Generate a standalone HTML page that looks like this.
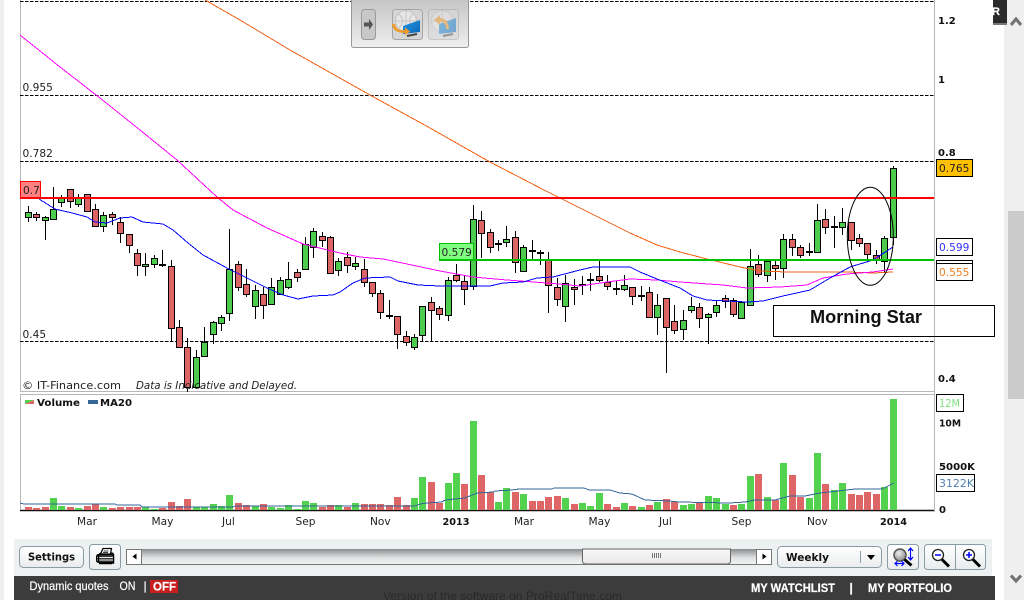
<!DOCTYPE html>
<html><head><meta charset="utf-8"><title>Chart</title>
<style>
html,body{margin:0;padding:0;width:1024px;height:600px;overflow:hidden;background:#fff}
svg{display:block;position:absolute;left:0;top:0}
text{font-family:"DejaVu Sans",sans-serif;font-size:10.6px;fill:#222}
.b{font-weight:bold;fill:#111;font-size:10px}
.l{font-family:"Liberation Sans",sans-serif;font-size:12px;fill:#fff;stroke:#fff;stroke-width:.2px}
</style></head><body>
<svg width="1024" height="600" viewBox="0 0 1024 600" xmlns="http://www.w3.org/2000/svg">
<defs>
<linearGradient id="tb" x1="0" y1="0" x2="0" y2="1"><stop offset="0" stop-color="#c4c4c4"/><stop offset="1" stop-color="#efefef"/></linearGradient>
<linearGradient id="btn" x1="0" y1="0" x2="0" y2="1"><stop offset="0" stop-color="#fff"/><stop offset="1" stop-color="#e9eced"/></linearGradient>
<linearGradient id="sb" x1="0" y1="0" x2="0" y2="1"><stop offset="0" stop-color="#8b8d8e"/><stop offset=".55" stop-color="#dfe1e2"/><stop offset="1" stop-color="#f4f5f5"/></linearGradient>
<linearGradient id="th" x1="0" y1="0" x2="0" y2="1"><stop offset="0" stop-color="#f8f8f8"/><stop offset="1" stop-color="#e8e8e8"/></linearGradient>
<linearGradient id="mon" x1="0" y1="0" x2="1" y2="1"><stop offset="0" stop-color="#1f9be0"/><stop offset="1" stop-color="#0d63b8"/></linearGradient>
<radialGradient id="gl" cx=".4" cy=".35" r=".7"><stop offset="0" stop-color="#eee"/><stop offset="1" stop-color="#888"/></radialGradient>
</defs>

<!-- page edges -->
<rect x="0" y="0" width="4" height="600" fill="#efefef"/>
<rect x="1004" y="0" width="20" height="600" fill="#efefef"/>
<rect x="1008" y="211" width="16" height="188" fill="#cbcbcb"/>
<path d="M1011 25l5-6 5 6" fill="none" stroke="#707070" stroke-width="3"/>
<path d="M1011 575.500l5 5.500 5-5.500" fill="none" stroke="#707070" stroke-width="3"/>
<rect x="993" y="0" width="14" height="23" fill="#2a2a2a"/>
<rect x="993" y="23" width="14" height="2" fill="#777"/>
<text x="992" y="15" class="l" style="font-weight:bold;font-size:11px">R</text>

<!-- frames -->
<path d="M20.5 0V392M20.5 394V511M934.5 0V512M20 391.5H934M20 394.5H934" fill="none" stroke="#b4b8ba" stroke-width="1"/>
<path d="M20 510.5H934" stroke="#111" stroke-width="1.5"/>

<!-- dashed levels -->
<path d="M20 1.5H934M20 95.5H934M20 161.5H934M20 341.5H934" fill="none" stroke="#000" stroke-dasharray="3.5 1.5"/>

<!-- volume bars -->
<path fill="#53d250" d="M50 510v-12h7v12zM58 510v-4h7v4zM75 510v-2h7v2zM100 510v-3h7v3zM142 510v-3h7v3zM151 510v-1h7v1zM193 510v-3h7v3zM201 510v-3h7v3zM210 510v-6h7v6zM218 510v-4h7v4zM226 510v-15h7v15zM252 510v-4h7v4zM268 510v-3h7v3zM277 510v-2h7v2zM285 510v-5h7v5zM294 510v-1h7v1zM302 510v-9h7v9zM310 510v-7h7v7zM335 510v-5h7v5zM352 510v-7h7v7zM411 510v-12h7v12zM419 510v-33h7v33zM445 510v-27h7v27zM453 510v-37h7v37zM470 510v-89h7v89zM495 510v-8h7v8zM503 510v-22h7v22zM520 510v-16h7v16zM562 510v-12h7v12zM579 510v-7h7v7zM587 510v-4h7v4zM596 510v-17h7v17zM621 510v-7h7v7zM638 510v-3h7v3zM654 510v-8h7v8zM680 510v-5h7v5zM688 510v-6h7v6zM705 510v-14h7v14zM713 510v-12h7v12zM722 510v-6h7v6zM738 510v-6h7v6zM747 510v-34h7v34zM764 510v-13h7v13zM780 510v-47h7v47zM806 510v-12h7v12zM814 510v-57h7v57zM831 510v-20h7v20zM839 510v-27h7v27zM881 510v-23h7v23zM890 510v-111h7v111z"/>
<path fill="#de6666" d="M25 510v-3h7v3zM33 510v-2h7v2zM42 510v-3h7v3zM67 510v-3h7v3zM84 510v-4h7v4zM92 510v-6h7v6zM109 510v-2h7v2zM117 510v-3h7v3zM126 510v-3h7v3zM134 510v-3h7v3zM159 510v-2h7v2zM168 510v-8h7v8zM176 510v-4h7v4zM184 510v-11h7v11zM235 510v-7h7v7zM243 510v-5h7v5zM260 510v-6h7v6zM319 510v-3h7v3zM327 510v-5h7v5zM344 510v-3h7v3zM361 510v-6h7v6zM369 510v-6h7v6zM377 510v-6h7v6zM386 510v-5h7v5zM394 510v-13h7v13zM403 510v-5h7v5zM428 510v-28h7v28zM436 510v-7h7v7zM461 510v-26h7v26zM478 510v-35h7v35zM487 510v-18h7v18zM512 510v-18h7v18zM529 510v-9h7v9zM537 510v-9h7v9zM545 510v-13h7v13zM554 510v-14h7v14zM571 510v-6h7v6zM604 510v-6h7v6zM613 510v-3h7v3zM629 510v-4h7v4zM646 510v-5h7v5zM663 510v-11h7v11zM671 510v-8h7v8zM696 510v-7h7v7zM730 510v-5h7v5zM755 510v-36h7v36zM772 510v-10h7v10zM789 510v-35h7v35zM797 510v-13h7v13zM822 510v-26h7v26zM848 510v-16h7v16zM856 510v-15h7v15zM864 510v-18h7v18zM873 510v-16h7v16z"/>
<polyline fill="none" stroke="#336699" stroke-width="1" shape-rendering="crispEdges" points="20,503 24,504 115,504 117,505 140,505 142,507 233,507 235,506 415,506 420,504 427,503 442,502 445,500 465,498 477,493 493,492 495,491 512,490 519,489 552,489 554,488 584,488 589,490 610,490 620,493 632,494 645,500 669,501 679,502 729,503 745,502 755,500 775,500 790,496 805,496 820,493 855,489 882,489 894,483"/>

<!-- candle wicks -->
<path fill="none" stroke="#000" stroke-width="1" d="M28.5 206V222M36.5 212V221M45.5 216V240M53.5 187V220M61.5 195V207M70.5 189V208M78.5 194V207M87.5 194V212M95.5 204V227M103.5 212V232M112.5 212V225M120.5 217V243M129.5 234V253M137.5 249V276M145.5 253V276M154.5 255V268M162.5 250V267M171.5 260V342M179.5 320V347M187.5 338V392M196.5 350V387M204.5 327V356M213.5 321V344M221.5 315V331M229.5 229V321M238.5 261V291M246.5 269V297M255.5 285V319M263.5 287V319M271.5 278V305M280.5 277V295M288.5 262V289M297.5 269V282M305.5 237V270M313.5 228V258M322.5 232V247M330.5 236V274M338.5 258V276M347.5 252V273M355.5 257V270M364.5 259V287M372.5 282V297M380.5 290V319M389.5 300V319M397.5 316V349M406.5 331V346M414.5 334V350M422.5 306V342M431.5 297V342M439.5 306V320M448.5 277V321M456.5 264V282M464.5 275V305M473.5 205V290M481.5 211V258M490.5 229V253M498.5 240V251M506.5 226V247M515.5 231V273M523.5 245V272M532.5 240V259M540.5 250V265M548.5 252V313M557.5 278V306M565.5 275V322M574.5 279V305M582.5 276V295M590.5 273V291M599.5 260V282M607.5 275V290M616.5 281V295M624.5 275V291M632.5 287V305M641.5 286V301M649.5 287V318M657.5 294V335M666.5 298V373M674.5 305V334M683.5 310V340M691.5 297V313M699.5 303V328M708.5 313V344M716.5 300V317M725.5 295V308M733.5 298V317M741.5 302V319M750.5 249V306M758.5 255V277M767.5 261V282M775.5 260V280M783.5 234V278M792.5 234V256M800.5 245V258M809.5 243V256M817.5 204V252M825.5 209V234M834.5 216V248M842.5 208V235M851.5 222V250M859.5 234V247M867.5 243V259M876.5 250V264M884.5 236V272M893.5 166V245"/>
<!-- green bodies -->
<path fill="#4ccb4c" stroke="#000" stroke-width="1" d="M25.5 212.5h6v5h-6zM42.5 217.5h6v3h-6zM50.5 209.5h6v10h-6zM58.5 198.5h6v4h-6zM75.5 198.5h6v6h-6zM100.5 215.5h6v11h-6zM142.5 264.5h6v2h-6zM151.5 258.5h6v6h-6zM193.5 357.5h6v30h-6zM201.5 342.5h6v14h-6zM210.5 322.5h6v12h-6zM218.5 317.5h6v6h-6zM226.5 269.5h6v44h-6zM252.5 290.5h6v16h-6zM268.5 287.5h6v17h-6zM277.5 280.5h6v14h-6zM285.5 279.5h6v8h-6zM302.5 244.5h6v25h-6zM310.5 231.5h6v16h-6zM335.5 261.5h6v9h-6zM352.5 263.5h6v3h-6zM411.5 337.5h6v10h-6zM419.5 306.5h6v29h-6zM445.5 280.5h6v35h-6zM470.5 219.5h6v67h-6zM503.5 239.5h6v3h-6zM520.5 247.5h6v24h-6zM562.5 283.5h6v23h-6zM621.5 285.5h6v4h-6zM654.5 305.5h6v12h-6zM680.5 320.5h6v9h-6zM688.5 306.5h6v4h-6zM705.5 314.5h6v3h-6zM713.5 305.5h6v7h-6zM738.5 302.5h6v16h-6zM747.5 266.5h6v39h-6zM764.5 261.5h6v14h-6zM780.5 239.5h6v29h-6zM814.5 220.5h6v32h-6zM839.5 222.5h6v5h-6zM881.5 238.5h6v23h-6zM890.5 168.5h6v69h-6z"/>
<!-- red bodies -->
<path fill="#dd6464" stroke="#000" stroke-width="1" d="M33.5 214.5h6v3h-6zM67.5 189.5h6v12h-6zM84.5 194.5h6v17h-6zM92.5 209.5h6v17h-6zM109.5 214.5h6v3h-6zM117.5 222.5h6v11h-6zM126.5 234.5h6v11h-6zM134.5 253.5h6v12h-6zM168.5 266.5h6v62h-6zM176.5 327.5h6v20h-6zM184.5 347.5h6v40h-6zM235.5 264.5h6v23h-6zM243.5 284.5h6v10h-6zM260.5 294.5h6v11h-6zM294.5 272.5h6v5h-6zM319.5 236.5h6v4h-6zM327.5 237.5h6v36h-6zM344.5 257.5h6v8h-6zM361.5 269.5h6v13h-6zM369.5 282.5h6v11h-6zM377.5 293.5h6v19h-6zM394.5 316.5h6v18h-6zM403.5 336.5h6v6h-6zM428.5 302.5h6v8h-6zM436.5 308.5h6v6h-6zM453.5 275.5h6v5h-6zM461.5 281.5h6v8h-6zM478.5 220.5h6v13h-6zM487.5 232.5h6v15h-6zM512.5 237.5h6v25h-6zM545.5 260.5h6v25h-6zM554.5 287.5h6v12h-6zM571.5 287.5h6v2h-6zM596.5 276.5h6v4h-6zM604.5 282.5h6v4h-6zM629.5 287.5h6v9h-6zM646.5 292.5h6v25h-6zM663.5 298.5h6v29h-6zM671.5 321.5h6v9h-6zM696.5 307.5h6v11h-6zM722.5 298.5h6v3h-6zM730.5 300.5h6v14h-6zM755.5 264.5h6v10h-6zM772.5 265.5h6v3h-6zM789.5 239.5h6v8h-6zM797.5 247.5h6v8h-6zM822.5 219.5h6v8h-6zM848.5 222.5h6v18h-6zM856.5 238.5h6v5h-6zM864.5 243.5h6v11h-6zM873.5 255.5h6v4h-6z"/>
<!-- doji -->
<path fill="none" stroke="#000" stroke-width="2" d="M159 265h7M386 316h7M495 244h7M529 251h7M537 253h7M579 285h7M587 280h7M613 289h7M638 296h7M806 252h7M831 227h7"/>

<!-- moving averages -->
<polyline fill="none" stroke="#f06010" stroke-width="1" shape-rendering="crispEdges" points="205,0 240,20 290,50 370,95 430,128 490,162 544,190 560,198 590,213 630,233 657,245 680,252 703,258 740,267 760,271 787,272 847,272 873,273 893,272"/>
<polyline fill="none" stroke="#f0f" stroke-width="1" shape-rendering="crispEdges" points="20,35 60,67 100,98 140,130 177,160 217,197 233,210 267,228 303,244 340,253 360,257 383,259 407,264 440,271 473,277 507,280 547,283 580,286 607,282 630,279 657,280 680,282 723,285 747,288 780,287 807,285 823,278 847,274 873,272 893,269"/>
<polyline fill="none" stroke="#00f" stroke-width="1" shape-rendering="crispEdges" points="39,199 55,209 72,213 87,217 95,222 107,223 120,218 132,217 143,222 163,224 173,230 188,243 203,255 227,268 247,278 267,288 283,295 298,299 313,296 333,295 340,292 353,283 365,278 390,277 398,281 418,285 440,286 490,286 503,283 523,282 537,278 553,277 580,270 593,267 630,267 640,272 657,279 680,288 693,296 707,300 747,302 763,301 783,296 810,290 830,278 850,267 873,260 893,247"/>

<!-- levels -->
<rect x="20" y="197" width="914" height="2" fill="#f00"/>
<rect x="439" y="259" width="495" height="2" fill="#00c000"/>
<rect x="20.5" y="181.5" width="20" height="16" fill="#ff8080" stroke="#f00"/>
<text x="23" y="194">0.7</text>
<rect x="439.5" y="243.5" width="34" height="16" fill="#80ff80" stroke="#00c000"/>
<text x="441.500" y="256">0.579</text>
<text x="22.500" y="91">0.955</text>
<text x="22.500" y="157">0.782</text>
<text x="22.500" y="338">0.45</text>
<text x="22" y="389" textLength="99" lengthAdjust="spacingAndGlyphs">© IT-Finance.com</text>
<text x="136" y="389" style="font-style:italic" textLength="161" lengthAdjust="spacingAndGlyphs">Data is Indicative and Delayed.</text>

<!-- annotation -->
<ellipse cx="870.3" cy="236.3" rx="23" ry="49" fill="none" stroke="#000"/>
<rect x="773.5" y="305.5" width="221" height="31" fill="none" stroke="#000"/>
<text x="810" y="323" style="font-family:'Liberation Sans',sans-serif;font-size:18px;font-weight:bold;fill:#111" textLength="112" lengthAdjust="spacingAndGlyphs">Morning Star</text>

<!-- right axis -->
<text x="938" y="24" class="b">1.2</text>
<text x="938" y="83" class="b">1</text>
<text x="938" y="156" class="b">0.8</text>
<text x="938" y="382" class="b">0.4</text>
<rect x="936.5" y="159.5" width="36" height="17" fill="#ffc000" stroke="#000"/>
<text x="939" y="172">0.765</text>
<rect x="936.5" y="238.5" width="36" height="17" fill="#fff" stroke="#000"/>
<text x="939" y="251" style="fill:#3333ff">0.599</text>
<rect x="936.5" y="260.5" width="36" height="3" fill="#fff" stroke="#000"/>
<rect x="936.5" y="263.5" width="36" height="17" fill="#fff" stroke="#000"/>
<text x="939" y="276" style="fill:#f08020">0.555</text>

<!-- volume legend -->
<path d="M25 400h9l-9 4z" fill="#53d250"/><path d="M34 400v4h-9z" fill="#de6666"/>
<text x="37" y="406" class="b" textLength="43" lengthAdjust="spacingAndGlyphs">Volume</text>
<rect x="88" y="400" width="10" height="4" fill="#336699"/>
<text x="100" y="406" class="b" textLength="32" lengthAdjust="spacingAndGlyphs">MA20</text>

<!-- volume axis -->
<rect x="936.5" y="394.5" width="27" height="17" fill="#fff" stroke="#000"/>
<text x="939" y="407" style="fill:#80e080" textLength="21" lengthAdjust="spacingAndGlyphs">12M</text>
<text x="939" y="426.500" class="b" textLength="22" lengthAdjust="spacingAndGlyphs">10M</text>
<text x="939" y="470" class="b" textLength="36" lengthAdjust="spacingAndGlyphs">5000K</text>
<rect x="936.5" y="474.5" width="38" height="17" fill="#fff" stroke="#000"/>
<text x="939" y="487" style="fill:#4f7fb0" textLength="35" lengthAdjust="spacingAndGlyphs">3122K</text>
<text x="939" y="513" class="b">0</text>

<!-- date axis -->
<text x="77" y="525">Mar</text><text x="151.500" y="525">May</text><text x="222" y="525">Jul</text><text x="295.500" y="525">Sep</text><text x="370" y="525">Nov</text><text x="442.500" y="525" class="b" textLength="27" lengthAdjust="spacingAndGlyphs">2013</text>
<text x="514" y="525">Mar</text><text x="588.500" y="525">May</text><text x="659" y="525">Jul</text><text x="731.500" y="525">Sep</text><text x="807" y="525">Nov</text><text x="880" y="525" class="b" textLength="27" lengthAdjust="spacingAndGlyphs">2014</text>

<!-- top floating toolbar -->
<rect x="351.5" y="-2" width="117" height="49.5" rx="2" fill="url(#tb)" stroke="#999"/>
<rect x="361.5" y="9.5" width="14" height="30" rx="3" fill="#c8c8c8" stroke="#999"/>
<path d="M364 22.5h5v-3.500l4 5.500-4 5.500v-3.500h-5z" fill="#555"/>
<g>
<rect x="392.500" y="9.500" width="30" height="30" rx="3" fill="#d6d6d6" stroke="#a5a5a5"/>
<circle cx="406" cy="21" r="10.500" fill="#e6e6e6" stroke="#c4c4c4"/>
<path d="M396 21h20M406 11v20M399 14q7 7 0 14M413 14q-7 7 0 14" fill="none" stroke="#c4c4c4"/>
<path d="M403 26l17-6v12l-17 2z" fill="url(#mon)"/>
<path d="M407 36l10-2" stroke="#444" stroke-width="2"/>
<path d="M395 24q1 7 10 6v-2.500l5 4-5 4v-2.500q-12 0-13-9z" fill="#f09a28"/>
</g>
<g opacity=".5">
<rect x="428.500" y="9.500" width="30" height="30" rx="3" fill="#d6d6d6" stroke="#a5a5a5"/>
<circle cx="442" cy="21" r="10.500" fill="#e6e6e6" stroke="#c4c4c4"/>
<path d="M432 21h20M442 11v20" fill="none" stroke="#c4c4c4"/>
<path d="M439 24l17-6v14l-17 2z" fill="url(#mon)"/>
<path d="M443 36l10-2" stroke="#444" stroke-width="2"/>
<path d="M449 29q-1-11-9-11v-3l-6 5 6 5v-3q6 0 6 7z" fill="#f09a28"/>
</g>

<!-- bottom toolbar -->
<rect x="14" y="539" width="978" height="37" fill="#edf1f2"/>
<rect x="19.500" y="546.500" width="64" height="21" rx="4" fill="url(#btn)" stroke="#8a9ba3"/>
<text x="28" y="560.500" class="b" style="font-size:10.500px" textLength="47" lengthAdjust="spacingAndGlyphs">Settings</text>
<rect x="89.500" y="544.500" width="31" height="25" rx="3" fill="url(#btn)" stroke="#8a9ba3"/>
<g fill="none" stroke="#000">
<path d="M99.500 558v-3a2 2 0 0 1 2-2h10a2 2 0 0 1 2 2v8h-2" stroke-width="1.500"/>
<rect x="96.500" y="554.500" width="17" height="8" rx="2" fill="#333"/>
<path d="M97 557.500h16M97 560h16" stroke="#eee" stroke-width="1"/>
<path d="M98.500 554v8M99 563.500h13" stroke-width="1.500"/>
<path d="M100.500 554l2.500-5.500h8.500l-1 5.500z" fill="#fff" stroke-width="1.200"/>
<path d="M103.500 551h5M103 552.500h5" stroke-width=".8"/>
</g>
<!-- scrollbar -->
<rect x="126" y="549" width="646" height="16" fill="url(#sb)"/>
<path d="M126 564.500H772" stroke="#777"/>
<rect x="126.500" y="549.500" width="15" height="15" fill="#fff" stroke="#777"/>
<path d="M136.500 553.500v6l-4-3z" fill="#000"/>
<rect x="756.500" y="549.500" width="15" height="15" fill="#fff" stroke="#777"/>
<path d="M762.500 553.500v6l4-3z" fill="#000"/>
<path d="M582.500 549v12a3 3 0 0 0 3 3h142a3 3 0 0 0 3-3v-12z" fill="url(#th)" stroke="#666"/>
<path d="M652.500 553v5M654.500 553v5M656.500 553v5M658.500 553v5M660.500 553v5" stroke="#777" stroke-width="1"/>
<!-- combo -->
<rect x="777.500" y="546.500" width="104" height="21" rx="4" fill="url(#btn)" stroke="#8a9ba3"/>
<text x="786" y="561" class="b" style="font-size:11px" textLength="43" lengthAdjust="spacingAndGlyphs">Weekly</text>
<path d="M860.500 551v12" stroke="#8a9ba3"/>
<path d="M867 555h8l-4 5z" fill="#000"/>
<!-- fit zoom -->
<rect x="887.500" y="544.500" width="31" height="25" rx="3" fill="url(#btn)" stroke="#8a9ba3"/>
<circle cx="900" cy="555" r="6" fill="url(#gl)" stroke="#555" stroke-width="1.500"/>
<path d="M904.500 559.500l7 6" stroke="#000" stroke-width="3"/>
<path d="M910.500 548v12M908 551l2.500-3 2.500 3M908 557l2.500 3 2.500-3M895 563.500h9M897.500 561l-2.500 2.500 2.500 2.500M901.500 561l2.500 2.500-2.500 2.500" fill="none" stroke="#00f" stroke-width="1.200"/>
<!-- zoom group -->
<rect x="924.500" y="544.500" width="61" height="25" rx="3" fill="url(#btn)" stroke="#8a9ba3"/>
<path d="M955.500 545v24" stroke="#8a9ba3"/>
<circle cx="938" cy="555" r="5.500" fill="#fff" stroke="#222" stroke-width="1.300"/>
<path d="M935 555h6" stroke="#00f" stroke-width="1.500"/>
<path d="M942 559.500l7 7" stroke="#000" stroke-width="3"/>
<circle cx="969" cy="555" r="5.500" fill="#fff" stroke="#222" stroke-width="1.300"/>
<path d="M966 555h6M969 552v6" stroke="#00f" stroke-width="1.500"/>
<path d="M973 559.500l7 7" stroke="#000" stroke-width="3"/>

<!-- dark bar -->
<rect x="14" y="576" width="981" height="24" fill="#3c3c3c"/>
<text x="383" y="600" class="l" style="fill:#2a2a2a;stroke:none" textLength="239" lengthAdjust="spacingAndGlyphs">Version of the software on ProRealTime.com</text>
<text x="29.500" y="590" class="l" textLength="79" lengthAdjust="spacingAndGlyphs">Dynamic quotes</text>
<text x="119.500" y="590" class="l" textLength="16" lengthAdjust="spacingAndGlyphs">ON</text>
<text x="143.500" y="590" class="l">|</text>
<rect x="150" y="580" width="28" height="13" fill="#c81e1e"/>
<text x="153" y="590.500" class="l" style="font-weight:bold" textLength="23" lengthAdjust="spacingAndGlyphs">OFF</text>
<text x="751" y="592" class="l" style="font-weight:bold" textLength="84" lengthAdjust="spacingAndGlyphs">MY WATCHLIST</text>
<text x="849.500" y="592" class="l" style="font-weight:bold">|</text>
<text x="868" y="592" class="l" style="font-weight:bold" textLength="84" lengthAdjust="spacingAndGlyphs">MY PORTFOLIO</text>
</svg>
</body></html>
